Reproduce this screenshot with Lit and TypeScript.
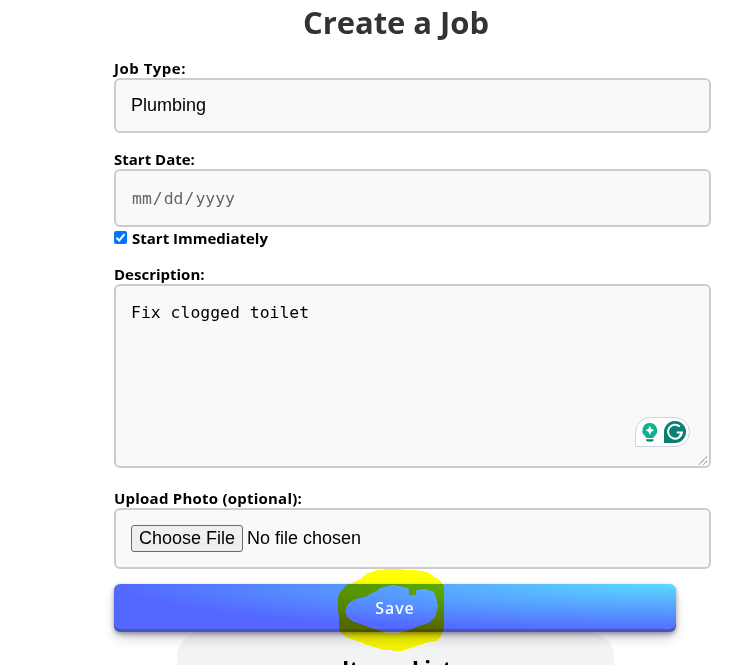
import { LitElement, html, css, svg } from "lit";
import { customElement } from "lit/decorators.js";

const assistantIcons = svg`
  <path d="M14.8 6a7.4 7.4 0 0 0-4.3 13.4l.6 1.6h7.4l.6-1.6A7.4 7.4 0 0 0 14.8 6z" fill="#10b090"/>
  <path d="M14.8 9.3c.6 2.5 1.2 3.2 3.8 4-2.6.8-3.2 1.5-3.8 4-.6-2.5-1.2-3.2-3.8-4 2.6-.8 3.2-1.5 3.8-4z" fill="#fff" stroke="#fff" stroke-width=".8"/>
  <path d="M11.1 22.2h7.5v1.3c-1 1.6-6.5 1.6-7.5 0z" fill="#0b8070"/>
  <path d="M29 26V15a11 11 0 1 1 11 11z" fill="#087f70"/>
  <path d="M44.8 9.5A7 7 0 1 0 47 15.6h-5.2M47 15.6l-2.5 4" fill="none" stroke="#fff" stroke-width="2"/>`;

@customElement("app-root")
export class AppRoot extends LitElement {
  static styles = css`
    :host { display: block; height: 665px; overflow: hidden; background: #fff; color: #000; font-family: "Open Sans", "Noto Sans", sans-serif; }
    * { box-sizing: border-box; }
    .form { width: 597px; margin-left: 114px; display: flex; flex-direction: column; }
    h1 { margin: 0; height: 58px; line-height: 45px; font-size: 31px; color: #333; padding-left: 189px; white-space: nowrap; letter-spacing: -.05px; }
    .label { height: 20px; line-height: 20px; font-size: 15px; font-weight: 700; }
    .spaced { letter-spacing: .23px; }
    .wide { letter-spacing: .5px; }
    .box { border: 2px solid #ccc; border-radius: 6px; background: #f9f9f9; padding: 0 15px; display: flex; align-items: center; }
    .sans { font: 18px "Liberation Sans", Arial, sans-serif; }
    .mono { font: 16.45px "DejaVu Sans Mono", monospace; }
    .type { height: 55px; margin-bottom: 16px; }
    .date { height: 58px; color: #666; padding-left: 16px; }
    .date i { font-style: normal; margin: 0 1px; }
    .check { height: 21px; display: flex; align-items: center; gap: 5px; font-size: 15px; font-weight: 700; margin-bottom: 16px; }
    .check svg { display: block; margin-top: -1px; }
    .desc { position: relative; height: 184px; margin-bottom: 20px; align-items: flex-start; padding-top: 17px; }
    .assist { position: absolute; left: 519px; top: 131px; width: 55px; height: 30px; border: 1px solid #cfd1de; border-radius: 15px 15px 15px 0; background: #fff; }
    .assist svg { position: absolute; left: -1px; top: -1px; }
    .grip { position: absolute; right: 0; bottom: 0; }
    .file { height: 61px; gap: 4px; margin-bottom: 15px; }
    .choose { height: 27px; width: 112px; padding: 0; border: 1px solid #6b6b6b; border-radius: 3px; background: #efefef; color: #000; white-space: nowrap; }
    .save { position: relative; z-index: 1; width: 562px; height: 48px; border: 0; border-radius: 6px; color: #fff; font: 500 16px "Noto Sans", sans-serif; letter-spacing: 1px; padding: 0;
      background: radial-gradient(100% 100% at 100% 0, #5adaff 0, #5468ff 100%);
      box-shadow: rgba(45,35,66,.4) 0 2px 4px, rgba(45,35,66,.3) 0 7px 13px -3px, rgba(58,65,111,.5) 0 -3px 0 inset; }
    .marker { position: absolute; left: 336px; top: 568px; z-index: 2; mix-blend-mode: multiply; }
    .panel { margin-left: 177px; width: 437px; height: 60px; border-radius: 25px 25px 0 0; background: #f3f3f3; }
    h2 { margin: 0; padding: 22px 0 0 165px; font-size: 22.5px; line-height: 32px; }
  `;

  render() {
    return html`
      <form class="form">
        <h1>Create a Job</h1>
        <div class="label wide">Job Type:</div>
        <div class="box sans type">Plumbing</div>
        <div class="label">Start Date:</div>
        <div class="box mono date">mm<i>/</i>dd<i>/</i>yyyy</div>
        <div class="check">
          <svg width="13" height="13" viewBox="0 0 13 13"><rect width="13" height="13" rx="2" fill="#0075ff"/><path d="M2.5 6.8l2.7 2.8 5.3-6.5" fill="none" stroke="#fff" stroke-width="2"/></svg>
          <span>Start Immediately</span>
        </div>
        <div class="label">Description:</div>
        <div class="box mono desc">Fix clogged toilet
          <div class="assist"><svg width="55" height="30" viewBox="0 0 55 30">${assistantIcons}</svg></div>
          <svg class="grip" width="11" height="11" viewBox="0 0 11 11"><path d="M1 9.5L9 1.5M5.5 9.5L9 6" stroke="#555" stroke-width="1" stroke-dasharray="1.2 .5"/></svg>
        </div>
        <div class="label spaced">Upload Photo (optional):</div>
        <div class="box sans file"><button type="button" class="choose sans">Choose File</button><span>No file chosen</span></div>
        <button type="button" class="save">Save</button>
      </form>
      <div class="panel"><h2>Items List</h2></div>
      <svg class="marker" width="110" height="86" viewBox="336 568 110 86" shape-rendering="crispEdges">
        <path fill="#ff0" fill-rule="evenodd" d="M338 597L341 591L345 586L352 583L360 579L368 573L377 570L391 569L414 570L427 572L435 577L441 581L444 587V629L441 636L436 641L425 643L414 647L401 651L385 650L370 646L358 641L348 638L341 633L339 628Z
        M345 611L348 604L355 599L365 597L374 592L383 587L393 585L403 587L409 589V595H416V590L425 589L434 592L437 600L438 607L435 618L428 623L416 627L407 631L397 633L387 633L374 629L363 625L354 622L348 618Z"/>
      </svg>`;
  }
}
